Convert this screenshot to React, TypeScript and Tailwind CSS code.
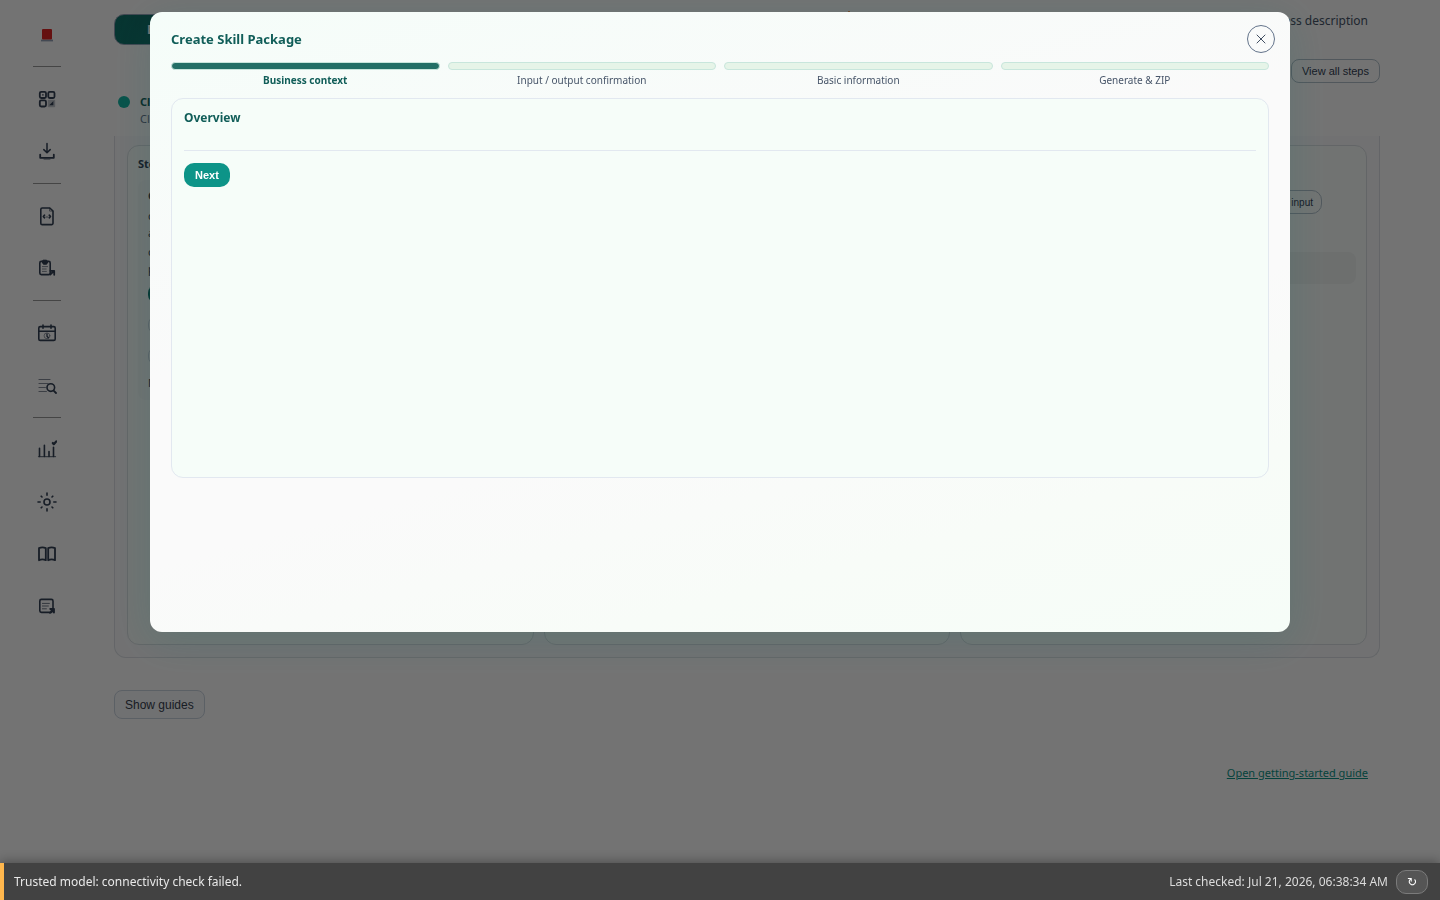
import { ReactNode } from 'react';
import { TriangleAlert, X } from 'lucide-react';

interface NavItem {
  label: string;
  icon: ReactNode;
}

const navGroups: NavItem[][] = [
  [
    {
      label: 'Dashboard',
      icon: (
        <>
          <rect x="2.8" y="2.8" width="6.2" height="6.2" rx="1.4" />
          <rect x="11.3" y="2.8" width="6.2" height="6.2" rx="1.4" />
          <rect x="2.8" y="11.3" width="6.2" height="6.2" rx="1.4" />
          <circle cx="5.9" cy="5.9" r="0.8" fill="currentColor" stroke="none" />
          <rect x="10.8" y="10.8" width="7.4" height="7.4" rx="1" fill="currentColor" stroke="none" opacity="0.3" />
          <path d="M12.2 16.2l4.2-4.2v4.2z" fill="currentColor" stroke="none" />
        </>
      ),
    },
    {
      label: 'Download',
      icon: (
        <>
          <path d="M10 2.6v8.8M6.8 8.6L10 11.8l3.2-3.2" strokeWidth="1.5" />
          <path d="M3.2 13.6v3.2h13.6v-3.2" />
          <path d="M7 18.2h6" strokeWidth="1" opacity="0.6" />
        </>
      ),
    },
  ],
  [
    {
      label: 'Scripts',
      icon: (
        <>
          <path d="M12.8 2H5.2A1.4 1.4 0 0 0 3.8 3.4v13.8a1.4 1.4 0 0 0 1.4 1.4h9.4a1.4 1.4 0 0 0 1.4-1.4V5z" strokeWidth="1.6" />
          <path d="M12.6 2.2v2.9h3.2" strokeWidth="1" opacity="0.6" />
          <path d="M7.4 9.3l-1 1.2 1 1.2M12.4 9.3l1 1.2-1 1.2" />
          <path d="M9 11h1.8" strokeWidth="1" opacity="0.7" />
        </>
      ),
    },
    {
      label: 'Tasks',
      icon: (
        <>
          <rect x="2.8" y="3.4" width="10.4" height="13.2" rx="1.5" strokeWidth="1.6" />
          <path d="M6.4 2.2h3.2L10.8 4 9.6 6.2H6.4L5.2 4z" fill="currentColor" strokeWidth="1" />
          <path d="M5.4 8.6h5.2M5.4 11h3.8M5.4 13.4h4" strokeWidth="1" opacity="0.6" />
          <path d="M13.2 16.6l3.6-3.6M13.4 12.8h3.8v4" />
        </>
      ),
    },
  ],
  [
    {
      label: 'Schedule',
      icon: (
        <>
          <rect x="1.8" y="3.6" width="16.4" height="13.8" rx="1.4" strokeWidth="1.6" />
          <path d="M1.8 8.2h16.4M6 2v3.2M14 2v3.2" strokeWidth="1.6" />
          <circle cx="10" cy="12.8" r="2.9" strokeWidth="1" opacity="0.5" />
          <path d="M10 11v2.2l1.4 1.6" strokeWidth="1.3" />
        </>
      ),
    },
    {
      label: 'Logs',
      icon: (
        <>
          <path d="M2 4.5h11M2 8.5h9M2 12.5h6.4M2 16.5h7.4" strokeWidth="1.2" opacity="0.6" />
          <circle cx="13.8" cy="12.6" r="3.8" strokeWidth="1.6" />
          <path d="M16.6 15.6l2.4 2.4" />
        </>
      ),
    },
  ],
  [
    {
      label: 'Reports',
      icon: (
        <>
          <path d="M2.5 16.4V8.2M7.4 16.4V5.2M12 16.4v-4.8M16.5 16.4V7.2" strokeWidth="1.6" />
          <path d="M1.4 16.6h17.2" strokeWidth="1.1" opacity="0.7" />
          <path d="M15.8 3l1 1.2 2.4-2.8" strokeWidth="2.2" />
        </>
      ),
    },
    {
      label: 'Settings',
      icon: (
        <>
          <circle cx="10" cy="10" r="3" strokeWidth="1.6" />
          <path d="M10 1v2.2M10 16.8V19M1 10h2.2M16.8 10H19M4.2 4.2l.8.8M15 15l.8.8M4.2 15.8l.8-.8M15 5l.8-.8" strokeWidth="1.6" />
        </>
      ),
    },
    {
      label: 'Guides',
      icon: (
        <>
          <path d="M2 16.2V4.2c2.1-.9 4.7-.9 6.8 0v12c-2.1-.9-4.7-.9-6.8 0z" />
          <path d="M11.2 16.2v-12c2.1-.9 4.7-.9 6.8 0v12c-2.1-.9-4.700-.9-6.8 0z" />
        </>
      ),
    },
    {
      label: 'Notes',
      icon: (
        <>
          <path d="M16 12V5a1.6 1.6 0 0 0-1.6-1.6H4.4A1.6 1.6 0 0 0 2.8 5v9.8a1.6 1.6 0 0 0 1.6 1.6h10" strokeWidth="1.6" />
          <path d="M5.4 7.4h7M5.4 10h6M5.4 12.8h4" strokeWidth="1" opacity="0.7" />
          <path d="M13 16.800l3.6-3.6M13.2 12.8h3.8v3.8z" fill="currentColor" />
        </>
      ),
    },
  ],
];

const wizardSteps = ['Business context', 'Input / output confirmation', 'Basic information', 'Generate & ZIP'];

function Sidebar() {
  return (
    <nav className="w-[94px] shrink-0 flex flex-col items-center pt-[10px] text-[#334155]" aria-label="Main">
      <a href="#home" aria-label="Home" className="h-[50px] flex items-center">
        <svg width="20" height="20" viewBox="0 0 20 20">
          <path d="M4 15.5h12" stroke="#94a3b8" strokeWidth="1.8" />
          <rect x="5" y="4" width="10" height="10.5" rx="1" fill="#e02424" />
        </svg>
      </a>
      {navGroups.map((group, i) => (
        <div key={i} className="flex flex-col items-center">
          <div className="w-7 h-px my-[6px] bg-[#9a9a9a]" />
          {group.map((item) => (
            <a key={item.label} href="#nav" aria-label={item.label} className="h-[52px] flex items-center">
              <svg
                width="20"
                height="20"
                viewBox="0 0 20 20"
                fill="none"
                stroke="currentColor"
                strokeWidth="1.8"
                strokeLinecap="round"
                strokeLinejoin="round"
              >
                {item.icon}
              </svg>
            </a>
          ))}
        </div>
      ))}
    </nav>
  );
}

function Workspace() {
  return (
    <main className="flex-1 min-w-0 pl-5 pr-[60px] flex flex-col">
      <header className="h-[45px] flex items-start justify-between">
        <button className="mt-[14px] h-[31px] px-8 rounded-[10px] border border-[#94a3b8] bg-linear-to-r from-[#0f766e] to-[#115e59] text-[12px] font-bold text-white">
          Edit
        </button>
        <p className="pt-3 pr-3 w-[537px] flex justify-between text-[12px] leading-[18px] text-[#475569]">
          <TriangleAlert className="size-3 -mt-0.5 text-[#f97316]" />
          <span>business description</span>
        </p>
      </header>

      <div className="mt-[14px] flex justify-end">
        <button className="h-6 px-[10px] rounded-lg border border-[#b4c2cc] font-['Liberation_Sans',sans-serif] text-[11px] text-[#334155]">
          View all steps
        </button>
      </div>
      <div className="mt-[10px] h-[43px] flex gap-[10px] pl-1">
        <span className="size-3 mt-[3px] rounded-full bg-[#14b8a6]" />
        <div className="text-[11px] leading-[17px]">
          <div className="font-bold text-[#115e59]">Click</div>
          <div className="text-[#64748b]">Click</div>
        </div>
      </div>

      <section className="h-[522px] px-3 pt-[9px] pb-3 grid grid-cols-3 gap-[10px] border border-t-0 border-[#dde1e6] rounded-b-xl bg-[#fbfbfd]">
        <div className="px-[10px] pt-[10px] border border-[#dbe1e4] rounded-xl bg-[#fafefd]">
          <h2 className="text-[11px] leading-4 font-bold text-[#334155]">Step 1</h2>
          <div className="mt-2 h-[220px] px-[10px] pt-[7px] rounded-lg bg-[#f5faf9] text-[11px] leading-[17px] text-[#334155]">
            <p className="font-bold">Create</p>
            <p className="mt-[3px] w-12">choose a&nbsp;new</p>
            <p className="mt-[2px] w-12">create package</p>
            <button className="mt-2 h-[18px] w-20 block rounded-lg bg-[#0f766e] text-[10px] text-white">Create</button>
            <button className="mt-[13px] h-[18px] w-20 block rounded-lg border border-[#cbd5e1] text-[10px]">Load</button>
            <button className="mt-[13px] h-[18px] w-20 block rounded-lg border border-[#cbd5e1] text-[10px]">Copy</button>
            <p className="mt-[9px]">More</p>
          </div>
        </div>
        <div className="border border-[#dbe1e4] rounded-xl bg-[#fafefd]" />
        <div className="px-[10px] pt-[44px] border border-[#dbe1e4] rounded-xl bg-[#fafefd]">
          <div className="flex justify-end pr-[34px]">
            <button className="h-6 px-2 rounded-[10px] border border-[#b4c2cc] font-['Liberation_Sans',sans-serif] text-[10px] text-[#334155]">
              from input
            </button>
          </div>
          <div className="mt-[38px] h-8 rounded-lg bg-[#f1f5f4]" />
        </div>
      </section>

      <div className="mt-8">
        <button className="h-[29px] px-[10px] rounded-lg border border-[#cbd5e1] bg-[#f8fafc] font-['Liberation_Sans',sans-serif] text-[12px] text-[#374151]">
          Show guides
        </button>
      </div>
      <div className="mt-[46px] pr-3 flex justify-end">
        <a href="#guide" className="text-[11px] leading-4 text-[#0d9488] underline">
          Open getting-started guide
        </a>
      </div>
    </main>
  );
}

function SkillPackageDialog() {
  return (
    <div
      role="dialog"
      aria-labelledby="dialog-title"
      className="relative w-full max-w-[1140px] h-[620px] px-[21px] pt-[18px] rounded-xl bg-[linear-gradient(165deg,#f5fdf9_0%,#fafafa_40%,#fafafa_60%,#f8fcf8_80%,#f6fdf8_100%)] shadow-[0_8px_40px_rgba(15,118,110,0.18)]"
    >
      <button
        aria-label="Close"
        className="absolute top-[13px] right-[15px] size-7 rounded-full border border-[#64748b] flex items-center justify-center text-[#334155]"
      >
        <X className="size-4" strokeWidth={1.4} />
      </button>

      <h1 id="dialog-title" className="text-[13px] leading-[18px] font-bold text-[#115e59]">
        Create Skill Package
      </h1>

      <ol className="mt-[14px] grid grid-cols-4 gap-2">
        {wizardSteps.map((step, i) => (
          <li key={step} className="text-center">
            <div
              className={
                i === 0
                  ? 'h-2 rounded-full border border-[#c8e6dc] bg-[#236f66]'
                  : 'h-2 rounded-full border border-[#c8e6dc] bg-[#e6f4e8]'
              }
            />
            <div
              className={
                i === 0
                  ? 'mt-[3px] text-[10px] leading-[14px] font-bold text-[#115e59]'
                  : 'mt-[3px] text-[10px] leading-[14px] text-[#475569]'
              }
            >
              {step}
            </div>
          </li>
        ))}
      </ol>

      <section className="mt-[11px] h-[380px] px-3 pt-[11px] border border-[#e2e8f0] rounded-xl bg-[#f6fdf9]">
        <h2 className="text-[12px] leading-4 font-bold text-[#115e59]">Overview</h2>
        <hr className="mt-6 mb-3 border-[#e2e8f0]" />
        <button className="block h-6 px-[11px] rounded-[10px] bg-[#0d9488] font-['Liberation_Sans',sans-serif] text-[11px] font-bold text-white">
          Next
        </button>
      </section>
    </div>
  );
}

function StatusBar() {
  return (
    <footer className="fixed inset-x-0 bottom-0 h-[37px] pl-[10px] pr-3 flex items-center gap-2 border-l-4 border-[#ffb74d] bg-[#424242] text-[12px] text-[#e8e8e8] shadow-[0_-2px_10px_rgba(0,0,0,0.3)]">
      <span className="flex-1">Trusted model: connectivity check failed.</span>
      <span className="text-[#dcdcdc]">Last checked: Jul 21, 2026, 06:38:34 AM</span>
      <button
        aria-label="Check again"
        className="h-6 w-8 rounded-[10px] border border-[#7b7b7b] bg-[#555555] font-['Liberation_Sans','DejaVu_Sans',sans-serif] text-[12px] text-white"
      >
        ↻
      </button>
    </footer>
  );
}

export default function App() {
  return (
    <div className="min-h-screen bg-white font-['Noto_Sans',sans-serif]">
      <div className="flex">
        <Sidebar />
        <Workspace />
      </div>
      <div className="fixed inset-0 px-6 pt-3 flex items-start justify-center bg-black/55">
        <SkillPackageDialog />
      </div>
      <StatusBar />
    </div>
  );
}
